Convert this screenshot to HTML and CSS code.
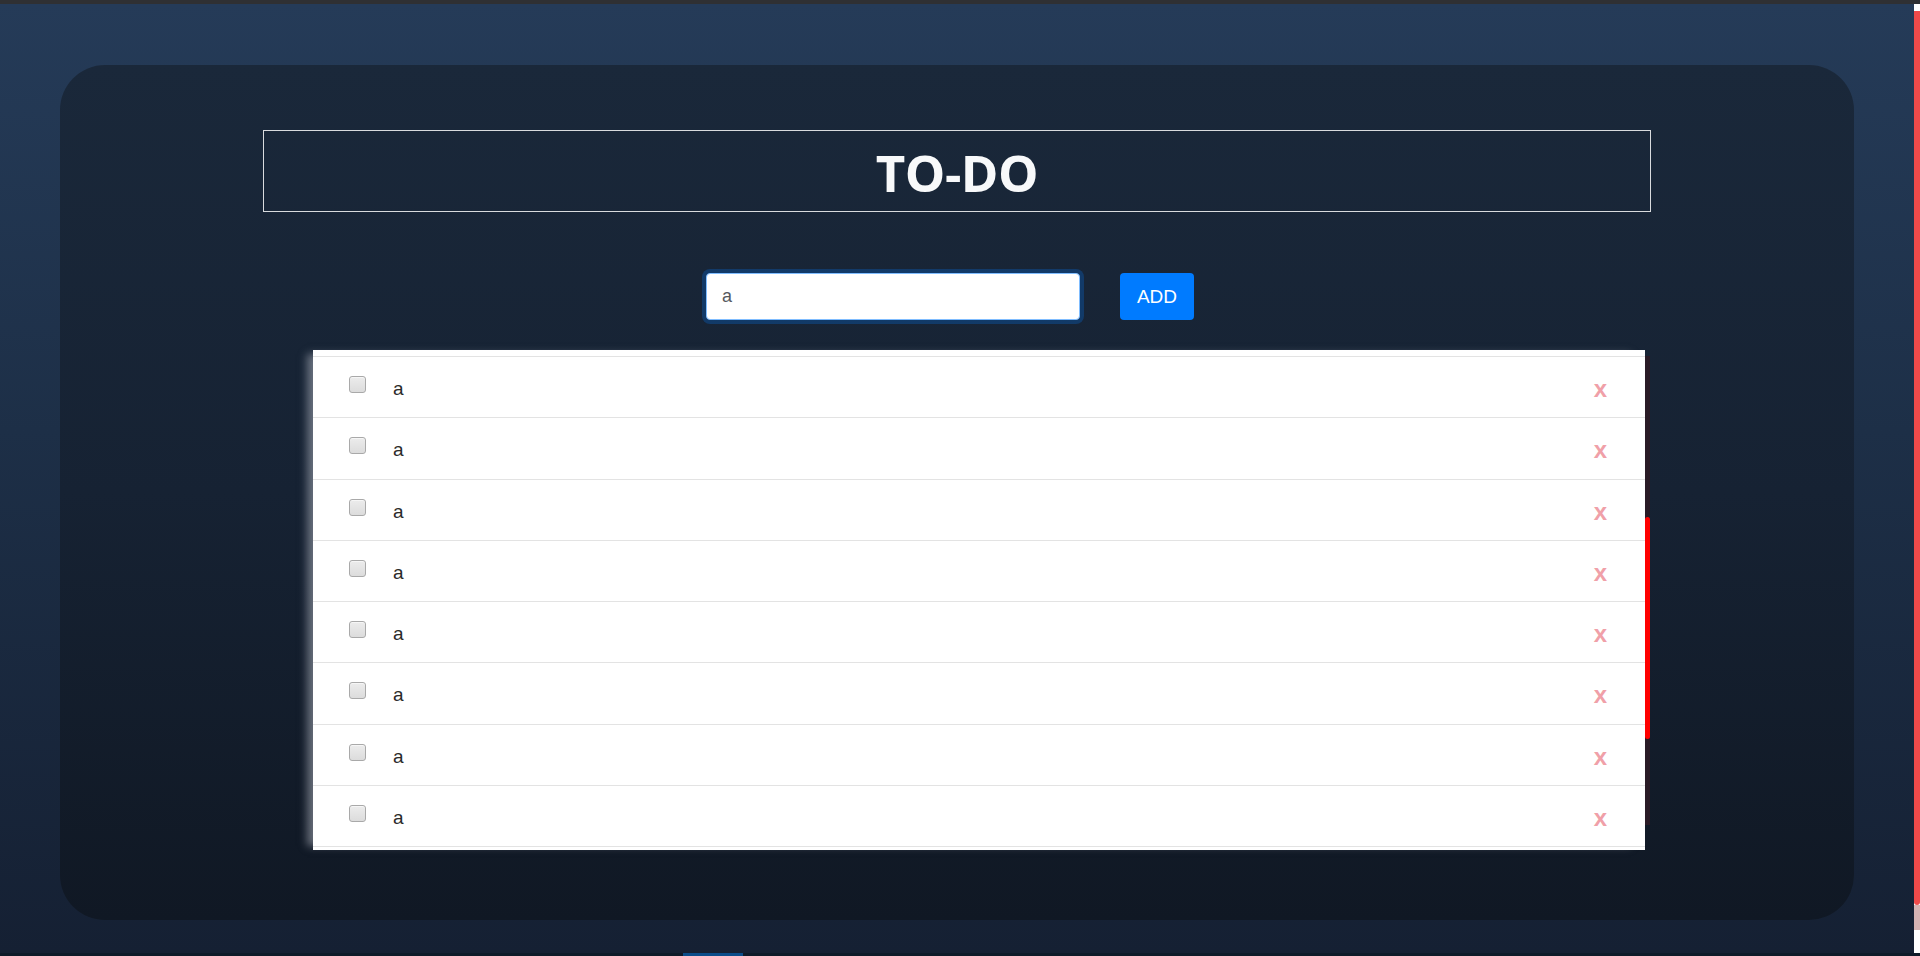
FILE: index.html
```html
<!DOCTYPE html>
<html lang="en">
<head>
<meta charset="utf-8">
<title>TO-DO</title>
<link rel="stylesheet" href="styles.css">
</head>
<body>
<div class="topbar"></div>
<div class="viewport">
  <main class="page">
    <section class="card">
      <header class="title-box"><h1 class="title">TO-DO</h1></header>
      <form class="add-form">
        <input class="task-input" type="text" value="a">
        <button class="add-btn" type="button">ADD</button>
      </form>
      <div class="list-wrap">
        <ul class="task-list">
          <li class="task"><input class="check" type="checkbox"><span class="task-text">a</span><span class="remove">x</span></li>
          <li class="task"><input class="check" type="checkbox"><span class="task-text">a</span><span class="remove">x</span></li>
          <li class="task"><input class="check" type="checkbox"><span class="task-text">a</span><span class="remove">x</span></li>
          <li class="task"><input class="check" type="checkbox"><span class="task-text">a</span><span class="remove">x</span></li>
          <li class="task"><input class="check" type="checkbox"><span class="task-text">a</span><span class="remove">x</span></li>
          <li class="task"><input class="check" type="checkbox"><span class="task-text">a</span><span class="remove">x</span></li>
          <li class="task"><input class="check" type="checkbox"><span class="task-text">a</span><span class="remove">x</span></li>
          <li class="task"><input class="check" type="checkbox"><span class="task-text">a</span><span class="remove">x</span></li>
          <li class="task task-partial"></li>
        </ul>
        <div class="list-track"><div class="list-thumb"></div></div>
      </div>
    </section>
  </main>
  <aside class="vscroll">
    <div class="vs-top"></div>
    <div class="vs-thumb"></div>
    <div class="vs-mid"></div>
    <div class="vs-rest"></div>
  </aside>
</div>
<footer class="bottom-strip"><div class="bottom-block"></div></footer>
</body>
</html>
```
FILE: styles.css
```css
* { box-sizing: border-box; }
html, body {
  margin: 0;
  padding: 0;
  height: 956px;
  overflow: hidden;
}
body {
  display: flex;
  flex-direction: column;
  font-family: "Liberation Sans", Arial, sans-serif;
  background: #141f31;
}
.topbar {
  height: 4px;
  flex: none;
  background: #2f3033;
}
.viewport {
  display: flex;
  flex: none;
  height: 949px;
}
.page {
  flex: 1;
  padding-top: 61px;
  background: linear-gradient(180deg, #253b58 0%, #1d2f47 45%, #152033 100%);
}
.card {
  width: 1794px;
  height: 855px;
  margin: 0 auto;
  border-radius: 45px;
  background: linear-gradient(180deg, #1a283a 0%, #162233 50%, #101824 100%);
  padding: 65px 203px 70px;
  display: flex;
  flex-direction: column;
}
.title-box {
  height: 82px;
  border: 1px solid #d9dbde;
  display: flex;
  align-items: center;
  justify-content: center;
}
.title {
  margin: 0;
  font-family: "Open Sans", "Liberation Sans", sans-serif;
  font-weight: 700;
  font-size: 51px;
  line-height: 1;
  color: #f8f9fa;
  padding-top: 2px;
  letter-spacing: -0.5px;
}
.add-form {
  margin: 61px 0 0;
  display: flex;
  justify-content: center;
  padding-right: 14px;
}
.task-input {
  width: 374px;
  height: 47px;
  border: 1px solid #80bdff;
  border-radius: 4px;
  box-shadow: 0 0 0 4px rgba(0, 123, 255, 0.25);
  padding: 0 15px;
  font-family: "Liberation Sans", Arial, sans-serif;
  font-size: 18px;
  color: #55595e;
  outline: none;
  background: #fff;
}
.add-btn {
  width: 74px;
  height: 47px;
  margin-left: 40px;
  border: none;
  border-radius: 4px;
  background: #007bff;
  color: #fff;
  font-family: "Liberation Sans", Arial, sans-serif;
  font-size: 19px;
  padding: 0;
}
.list-wrap {
  margin-top: 30px;
  margin-left: 50px;
  width: 1337px;
  height: 500px;
  display: flex;
  align-items: flex-start;
}
.task-list {
  list-style: none;
  margin: 0;
  padding: 6px 0 0;
  flex: 1;
  height: 500px;
  overflow: hidden;
  background: #fff;
  box-shadow: -10px 0 8px -4px rgba(185, 190, 200, 0.5);
}
.task {
  height: 61.25px;
  border-top: 1px solid #e3e3e3;
  display: flex;
  align-items: flex-start;
  padding-top: 19px;
}
.check {
  appearance: none;
  -webkit-appearance: none;
  margin: 0 0 0 36px;
  width: 17px;
  height: 17px;
  flex: none;
  border: 1px solid #a9a9a9;
  border-radius: 3px;
  background: linear-gradient(180deg, #ececec 0%, #dcdcdc 100%);
  box-shadow: inset 0 1px 0 #f6f6f6;
}
.task-text {
  margin: 3px 0 0 27px;
  font-size: 19px;
  line-height: 19px;
  color: #2a2a2a;
}
.remove {
  margin: 1px 38px 0 auto;
  font-family: "Liberation Sans", Arial, sans-serif;
  font-weight: 700;
  font-size: 24px;
  line-height: 24px;
  color: #f0a0a8;
}
.list-track {
  width: 5px;
  flex: none;
  margin-top: 6px;
  height: 469px;
  padding-top: 161px;
  background: #2a1b26;
}
.list-thumb {
  height: 222px;
  background: #ff0000;
  border-radius: 3px;
}
.vscroll {
  width: 6px;
  flex: none;
  display: flex;
  flex-direction: column;
  background: #ffffff;
}
.vs-top { height: 7px; background: #ffffff; }
.vs-thumb {
  height: 894px;
  background: #ef4a4a;
  border-radius: 0 0 3px 3px;
}
.vs-mid { height: 25px; background: #d6b3b3; }
.vs-rest { flex: 1; background: #ffffff; }
.bottom-strip {
  flex: 1;
  background: #0e1b29;
  padding-left: 683px;
  display: flex;
}
.bottom-block {
  width: 60px;
  background: #0b4d8a;
}
```
